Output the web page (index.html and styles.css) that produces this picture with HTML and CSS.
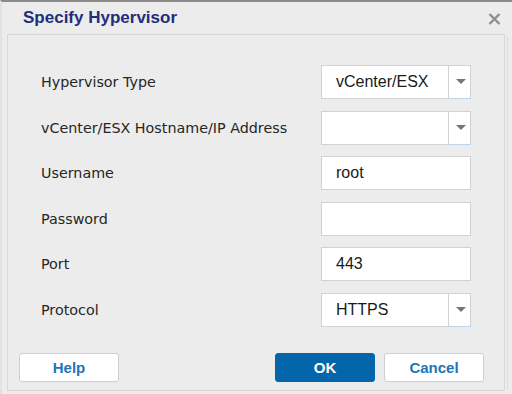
FILE: index.html
```html
<!DOCTYPE html>
<html lang="en">
  <head>
    <meta charset="UTF-8" />
    <meta name="viewport" content="width=device-width, initial-scale=1.0" />
    <title>Specify Hypervisor</title>
    <link rel="stylesheet" href="styles.css">
  </head>
  <body>
    <div class="dialog">
      <div class="titlebar">
        <span class="title">Specify Hypervisor</span>
        <span class="close">
          <svg width="13" height="12" viewBox="0 0 13 12">
            <path d="M1.5 1 L11.5 11 M11.5 1 L1.5 11" stroke="#8e8e8e" stroke-width="2.4" fill="none" />
          </svg>
        </span>
      </div>

      <div class="panel">
        <div class="form">
          <label class="label">Hypervisor Type</label>
          <div class="field combo">
            <span class="value">vCenter/ESX</span>
            <span class="arrow"><i></i></span>
          </div>

          <label class="label">vCenter/ESX Hostname/IP Address</label>
          <div class="field combo">
            <span class="value"></span>
            <span class="arrow"><i></i></span>
          </div>

          <label class="label">Username</label>
          <div class="field"><span class="value">root</span></div>

          <label class="label">Password</label>
          <div class="field"><span class="value"></span></div>

          <label class="label">Port</label>
          <div class="field"><span class="value">443</span></div>

          <label class="label">Protocol</label>
          <div class="field combo">
            <span class="value">HTTPS</span>
            <span class="arrow"><i></i></span>
          </div>
        </div>

        <div class="footer">
          <button class="btn">Help</button>
          <div class="spacer"></div>
          <button class="btn primary">OK</button>
          <button class="btn">Cancel</button>
        </div>
      </div>
    </div>
  </body>
</html>
```

FILE: styles.css
```css
* {
  box-sizing: border-box;
}

body {
  margin: 0;
  background: #ececec;
}

.dialog {
  width: 512px;
  height: 394px;
  background: #ececec;
  border-top: 2px solid #8a8a8a;
  border-left: 2px solid #e2e2e2;
  font-family: 'Liberation Sans', Arial, sans-serif;
}

.titlebar {
  height: 32px;
  display: flex;
  align-items: center;
  padding-left: 21px;
  padding-right: 11px;
}
.title {
  flex: 1;
  font-size: 17px;
  font-weight: bold;
  color: #1f2e7c;
}
.close {
  display: flex;
  margin-top: 1px;
}

.panel {
  margin-left: 5px;
  width: 498px;
  height: 357px;
  border: 1px solid #d8d8d8;
  box-shadow: 4px 0 0 -2px #ececec, 5px 0 0 -2px #dcdcdc;
  padding: 30px 20px 0 11px;
}

.form {
  display: grid;
  grid-template-columns: 280px 150px;
  row-gap: 11.6px;
  padding-left: 22px;
}
.label {
  display: flex;
  align-items: center;
  font-family: 'DejaVu Sans', Tahoma, sans-serif;
  font-size: 14.3px;
  color: #262626;
}
.field {
  height: 34px;
  display: flex;
  background: #fff;
  border: 1px solid #d2d2d2;
}
.value {
  flex: 1;
  display: flex;
  align-items: center;
  padding-left: 14px;
  font-size: 16px;
  color: #1a1a1a;
}
.arrow {
  width: 23px;
  margin: -1px -1px -1px 0;
  border-left: 1px solid #d2d2d2;
  border-bottom: 1px solid #bcd4ea;
  display: flex;
  align-items: center;
  justify-content: center;
}
.arrow i {
  display: block;
  width: 0;
  height: 0;
  border-left: 5px solid transparent;
  border-right: 5px solid transparent;
  border-top: 5px solid #767676;
  margin-left: 2px;
}

.footer {
  display: flex;
  gap: 9px;
  margin-top: 26px;
}
.spacer {
  flex: 1;
}
.btn {
  width: 100px;
  height: 29px;
  background: #fff;
  border: 1px solid #cfcfcf;
  border-radius: 3px;
  font-family: 'Liberation Sans', Arial, sans-serif;
  font-size: 15px;
  font-weight: bold;
  color: #2274b8;
}
.primary {
  background: #0366aa;
  border-color: #0366aa;
  color: #fff;
}
```
